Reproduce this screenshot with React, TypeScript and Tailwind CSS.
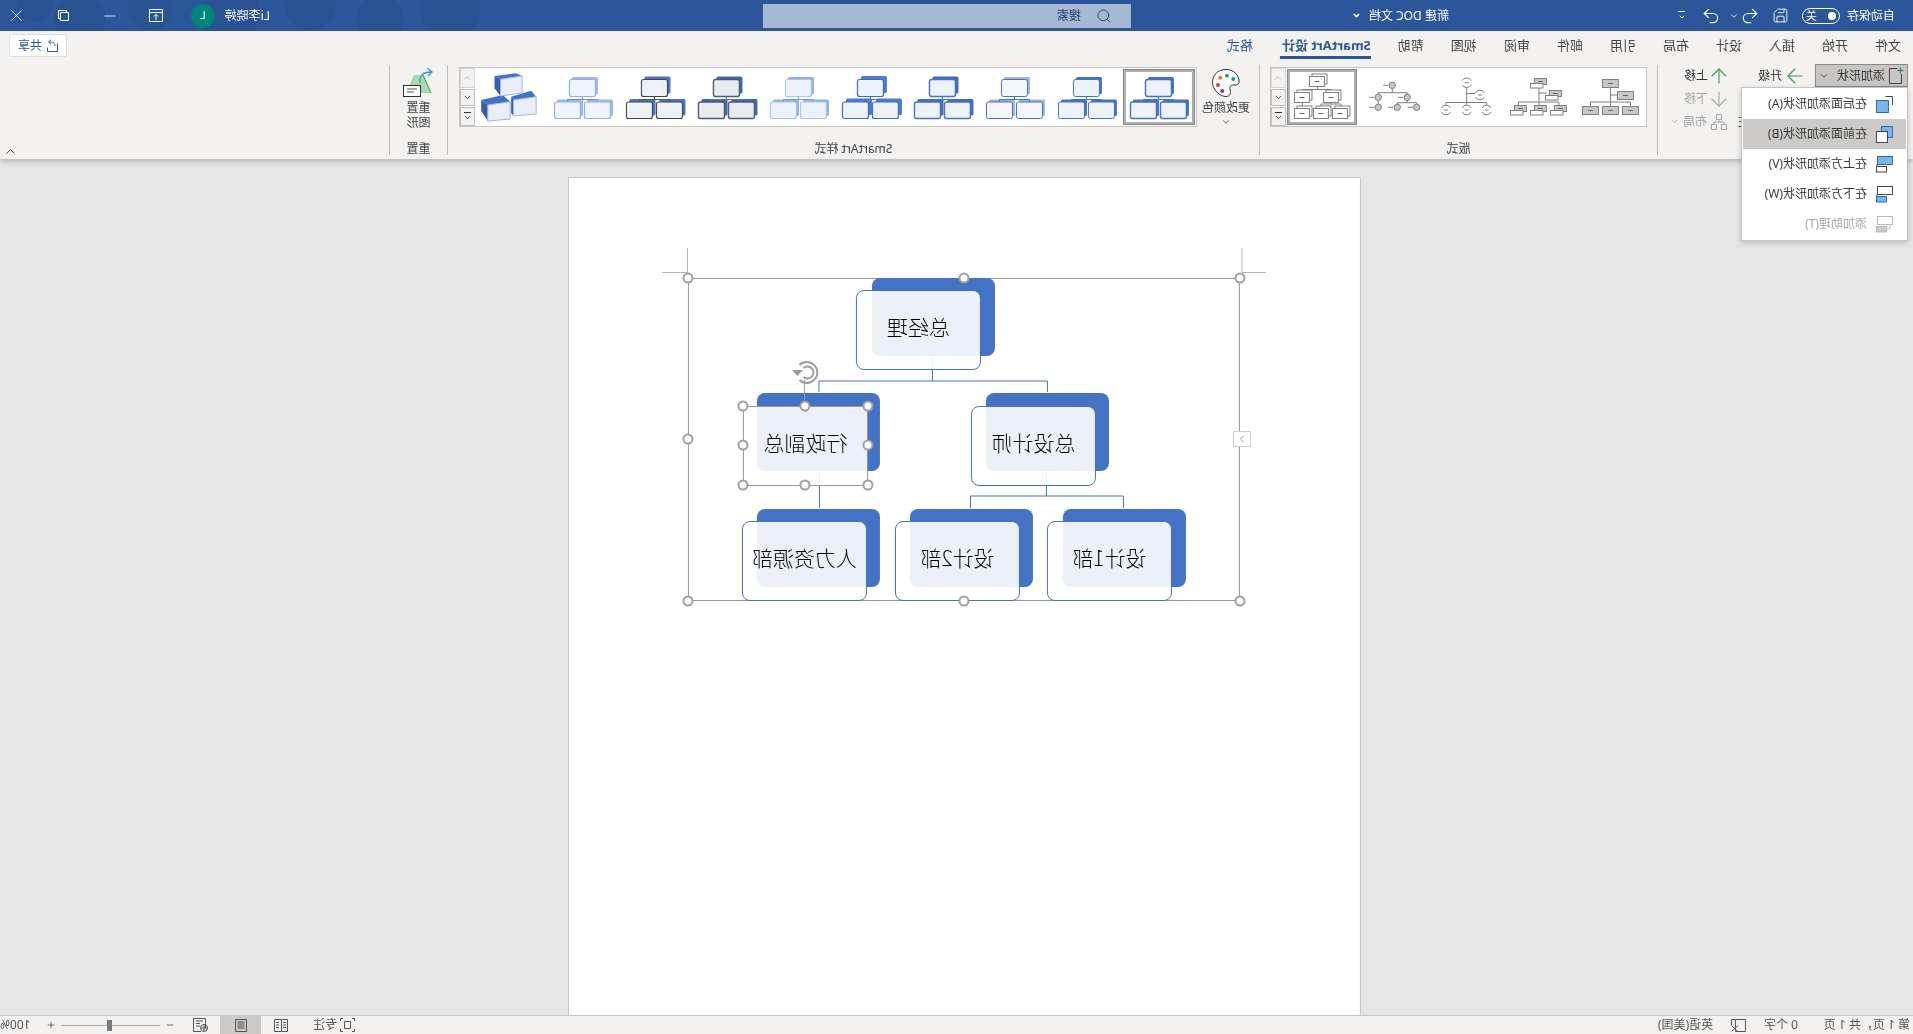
import {
  ArrowDown,
  ArrowRight,
  ArrowUp,
  ChevronDown,
  ChevronRight,
  ChevronUp,
  Minus,
  Plus,
  Redo2,
  Save,
  Search,
  Undo2,
  X,
} from "lucide-react";
import type { ReactNode } from "react";

const TABS = ["文件", "开始", "插入", "设计", "布局", "引用", "邮件", "审阅", "视图", "帮助"];

// the whole page is flipped at the root; thumbs use this svg class to draw in picture coordinates
const THUMB = "-scale-x-100 block h-[56px] w-[72px]";

function TitleBar() {
  return (
    <div className="relative flex h-[31px] shrink-0 items-center overflow-hidden bg-[#2b579a] text-[12px] text-white">
      <svg className="absolute right-0 top-0 h-[31px] w-[480px]" viewBox="0 0 480 31">
        <g fill="#285292">
          <circle cx="30" cy="8" r="30" />
          <circle cx="100" cy="20" r="24" />
          <circle cx="170" cy="4" r="26" />
          <circle cx="250" cy="14" r="30" />
          <circle cx="330" cy="8" r="22" />
          <circle cx="400" cy="20" r="26" />
          <circle cx="445" cy="4" r="18" />
        </g>
      </svg>
      <span className="ml-[18px]">自动保存</span>
      <div className="ml-[7px] flex h-[16px] w-[38px] items-center justify-between rounded-full border border-white px-[3px] text-[11px] leading-none">
        <span className="size-[8px] rounded-full bg-white" />
        <span>关</span>
      </div>
      <Save className="ml-[13px]" size={17} strokeWidth={1.3} />
      <Undo2 className="ml-[12px]" size={20} strokeWidth={1.4} />
      <ChevronDown className="ml-[1px]" size={10} />
      <Redo2 className="ml-[8px]" size={20} strokeWidth={1.4} />
      <div className="ml-[14px] flex w-[10px] flex-col items-center">
        <span className="mb-[1px] h-px w-[7px] bg-white" />
        <ChevronDown size={8} strokeWidth={3} />
      </div>
      <span className="ml-[228px] w-[84px]">新建 DOC 文档</span>
      <ChevronDown size={9} strokeWidth={4} className="ml-[4px]" />
      <div className="ml-[221px] flex h-[24px] w-[368px] items-center bg-[#a7b9d2] text-[#1c3a6e]">
        <Search className="ml-[19px] -scale-x-100" size={16} strokeWidth={1.4} />
        <span className="ml-[15px]">搜索</span>
      </div>
      <span className="relative ml-[493px] w-[45px] whitespace-nowrap">Li李晓婷</span>
      <div className="relative ml-[10px] flex size-[24px] items-center justify-center rounded-full bg-[#00847c] text-[11px]">
        L
      </div>
      <svg className="relative ml-[28px]" width="14" height="14" viewBox="0 0 14 14" fill="none" stroke="white">
        <path d="M.5 .5h13v12H.5zM.5 3.500h13M7 11V5.500M4.800 7.500 7 5.300l2.200 2.200" />
      </svg>
      <Minus className="relative ml-[30px]" size={18} strokeWidth={1.1} />
      <svg className="relative ml-[32px]" width="11" height="11" viewBox="0 0 11 11" fill="none" stroke="white">
        <path d="M.5 2.500h8v8h-8zM2.500 2.500v-2h8v8h-2" />
      </svg>
      <X className="relative ml-[32px]" size={19} strokeWidth={1.1} />
    </div>
  );
}

function TabRow() {
  return (
    <div className="flex h-[31px] items-start pl-[12px] text-[13px] text-[#444]">
      <div className="flex gap-[27px]">
        {TABS.map((tab) => (
          <span key={tab} className="pt-[5px] leading-[18px]">
            {tab}
          </span>
        ))}
        <span className="h-[28px] border-b-[3px] border-[#2b579a] pr-[2px] pt-[5px] font-bold leading-[18px] text-[#2b579a]">
          SmartArt 设计
        </span>
        <span className="pt-[5px] leading-[18px] text-[#2b579a]">格式</span>
      </div>
      <div className="ml-auto mr-[9px] mt-[3px] flex h-[23px] w-[58px] items-center justify-center gap-[4px] rounded-[2px] border border-[#e1dfdd] bg-white text-[12px] text-[#2b579a]">
        <svg width="12" height="13" viewBox="0 0 12 13" fill="none" stroke="#2b579a">
          <path d="M.5 4.500v8h10v-4M3 7c0-3 2-4 6-4M7 .8 9.500 3 7 5.200" />
        </svg>
        共享
      </div>
    </div>
  );
}

function RowItem({ icon, label, muted }: { icon: ReactNode; label: string; muted?: boolean }) {
  return (
    <div className={`flex h-[23px] items-center gap-[3px] text-[12px] ${muted ? "text-[#a6a6a6]" : "text-[#333]"}`}>
      {icon}
      <span className="whitespace-nowrap">{label}</span>
    </div>
  );
}

function MenuIcon({ kind }: { kind: "a" | "b" | "c" | "d" | "e" }) {
  const blue = "#7db5ea";
  const edge = "#1f6fb5";
  const dark = "#444";
  if (kind === "a") {
    return (
      <svg width="17" height="17" viewBox="0 0 17 17" fill="none">
        <path d="M.5 9V.5h7" stroke={dark} />
        <rect x="4.500" y="4.500" width="12" height="12" fill={blue} stroke={edge} />
      </svg>
    );
  }
  if (kind === "b") {
    return (
      <svg width="17" height="17" viewBox="0 0 17 17" fill="none">
        <rect x=".5" y=".5" width="11" height="11" fill={blue} stroke={edge} />
        <rect x="5.500" y="5.500" width="11" height="11" fill="#fff" stroke={dark} />
      </svg>
    );
  }
  if (kind === "c") {
    return (
      <svg width="17" height="17" viewBox="0 0 17 17" fill="none">
        <rect x=".5" y=".5" width="15" height="8" fill={blue} stroke={edge} />
        <rect x="6.500" y="10.500" width="10" height="5.500" fill="#fff" stroke={dark} />
        <path d="M16 8v2" stroke={dark} />
      </svg>
    );
  }
  if (kind === "d") {
    return (
      <svg width="17" height="17" viewBox="0 0 17 17" fill="none">
        <rect x=".5" y=".5" width="15" height="8" fill="#fff" stroke={dark} />
        <rect x="6.500" y="10.500" width="10" height="5.500" fill={blue} stroke={edge} />
        <path d="M16 8v2" stroke={edge} />
      </svg>
    );
  }
  return (
    <svg width="17" height="17" viewBox="0 0 17 17" fill="none">
      <rect x=".5" y=".5" width="15" height="8" fill="#fff" stroke="#bbb" />
      <rect x="6.500" y="10.500" width="10" height="5.500" fill="#ccc" stroke="#bbb" />
      <path d="M3 8.500v4.500h3.500" stroke="#bbb" />
    </svg>
  );
}

function AddShapeMenu() {
  const items = [
    { kind: "a" as const, label: "在后面添加形状(A)" },
    { kind: "b" as const, label: "在前面添加形状(B)", active: true },
    { kind: "c" as const, label: "在上方添加形状(V)" },
    { kind: "d" as const, label: "在下方添加形状(W)" },
    { kind: "e" as const, label: "添加助理(T)", muted: true },
  ];
  return (
    <div className="absolute left-[5px] top-[25px] z-20 w-[167px] border border-[#c8c6c4] bg-white p-px shadow-[0_2px_6px_rgba(0,0,0,0.2)]">
      {items.map((item) => (
        <div
          key={item.kind}
          className={`flex h-[30px] items-center whitespace-nowrap pl-[13px] text-[12px] ${
            item.active ? "bg-[#cdcbc9]" : ""
          } ${item.muted ? "text-[#a6a6a6]" : "text-[#333]"}`}
        >
          <MenuIcon kind={item.kind} />
          <span className="ml-[9px]">{item.label}</span>
        </div>
      ))}
    </div>
  );
}

function CreateGroup() {
  return (
    <div className="relative flex h-[97px] w-[255px] shrink-0 pl-[5px] pt-[2px]">
      <div className="flex h-[23px] w-[93px] items-center border border-[#8a8886] bg-[#c8c6c4] pl-[3px] text-[12px] text-[#333]">
        <svg width="16" height="17" viewBox="0 0 16 17" fill="none">
          <path d="M6.500 1.500h8v15h-12V7" stroke="#444" />
          <path d="M3.500 .5v6M.5 3.500h6" stroke="#2e9e4f" strokeWidth="1.300" />
        </svg>
        <span className="ml-[3px] whitespace-nowrap">添加形状</span>
        <ChevronDown className="ml-[8px]" size={10} strokeWidth={2} />
      </div>
      <AddShapeMenu />
      <div className="ml-[10px] flex w-[78px] flex-col">
        <RowItem icon={<ArrowRight className="-mx-[2px]" size={24} strokeWidth={1.1} color="#2e9e4f" />} label="升级" />
        <div className="h-[23px]" />
        <div className="flex h-[23px] items-center pl-[19px] text-[12px] text-[#333]">
          <span className="whitespace-nowrap">从右向左</span>
        </div>
      </div>
      <div className="flex flex-col">
        <RowItem icon={<ArrowUp className="-my-[4px] -mx-[4px]" size={24} strokeWidth={1.1} color="#2e9e4f" />} label="上移" />
        <RowItem
          icon={<ArrowDown className="-my-[4px] -mx-[4px]" size={24} strokeWidth={1.1} color="#a6a6a6" />}
          label="下移"
          muted
        />
        <div className="flex h-[23px] items-center gap-[4px] text-[12px] text-[#a6a6a6]">
          <svg width="16" height="16" viewBox="0 0 16 16" fill="none" stroke="#a6a6a6">
            <path d="M5.500 .5h5v5h-5zM.5 10.500h5v5h-5zM10.500 10.500h5v5h-5zM8 5.500V8M3 10.500V8h10v2.500" />
          </svg>
          布局
          <ChevronDown size={9} strokeWidth={2} />
        </div>
      </div>
    </div>
  );
}

function Scroller() {
  return (
    <div className="flex w-[15px] shrink-0 flex-col gap-px self-stretch">
      <div className="flex h-[20px] items-center justify-center border border-[#d8d6d4] bg-[#f3f2f1] text-[#bdbbb9]">
        <ChevronUp size={10} strokeWidth={2} />
      </div>
      <div className="flex h-[18px] items-center justify-center border border-[#c0bebc] bg-[#f3f2f1] text-[#333]">
        <ChevronDown size={9} strokeWidth={2.5} />
      </div>
      <div className="flex h-[19px] flex-col items-center justify-center border border-[#c0bebc] bg-[#f3f2f1] text-[#333]">
        <span className="h-px w-[7px] bg-[#333]" />
        <ChevronDown size={9} strokeWidth={2.5} />
      </div>
    </div>
  );
}

function Box({ x, y, w, h, gray }: { x: number; y: number; w: number; h: number; gray?: boolean }) {
  return (
    <>
      <rect x={x} y={y} width={w} height={h} fill={gray ? "#c8c8c8" : "#fff"} stroke="#7f7f7f" />
      <path d={`M${x + w / 2 - 2.5} ${y + h / 2}h5`} stroke="#666" />
    </>
  );
}

function LayoutThumb({ index }: { index: number }) {
  if (index === 0) {
    return (
      <svg className={THUMB} viewBox="0 0 72 56" fill="none">
        <path d="M37.500 18v15M17.500 37v-4h40v4M37.500 33v4M37.500 26H44" stroke="#7f7f7f" />
        <Box x={29.5} y={10.5} w={16} h={8} gray />
        <Box x={44.5} y={22.5} w={16} h={8} gray />
        <Box x={9.5} y={37.5} w={16} h={8} gray />
        <Box x={29.5} y={37.5} w={16} h={8} gray />
        <Box x={49.5} y={37.5} w={16} h={8} gray />
      </svg>
    );
  }
  if (index === 1) {
    const pairs = [
      [33.5, 9.5, 29.5, 14.5],
      [48.5, 21.5, 44.5, 26.5],
      [13.5, 36.5, 9.5, 41.5],
      [33.5, 36.5, 29.5, 41.5],
      [53.5, 36.5, 49.5, 41.5],
    ];
    return (
      <svg className={THUMB} viewBox="0 0 72 56" fill="none">
        <path d="M38 18v15M17.500 37v-4h40.500v4M38 33v4M38 24h8" stroke="#7f7f7f" />
        {pairs.map(([gx, gy, wx, wy]) => (
          <g key={`${gx}-${gy}`}>
            <Box x={gx} y={gy} w={12} h={6} gray />
            <rect x={wx} y={wy} width={12.5} height={4.5} fill="#fff" stroke="#7f7f7f" />
          </g>
        ))}
      </svg>
    );
  }
  if (index === 2) {
    const rings = [
      [37.7, 13.7],
      [51, 26],
      [17, 41],
      [37.7, 41],
      [57.7, 41],
    ];
    return (
      <svg className={THUMB} viewBox="0 0 72 56" fill="none" stroke="#7f7f7f">
        <path d="M37.700 18.500v15M17 36v-2.500h40.700V36M37.700 33.500V36M37.700 24.500H46" />
        {rings.map(([cx, cy]) => (
          <path
            key={`${cx}-${cy}`}
            d={`M${cx - 4.5} ${cy - 2}a5 5 0 0 1 9 0M${cx - 4.5} ${cy + 2}a5 5 0 0 0 9 0M${cx - 2} ${cy}h4`}
          />
        ))}
      </svg>
    );
  }
  if (index === 3) {
    const dots = [
      [35.3, 16.3],
      [21.3, 28.3],
      [21.3, 38.3],
      [50.3, 28.3],
      [40.3, 38.3],
      [59.7, 38.3],
    ];
    return (
      <svg className={THUMB} viewBox="0 0 72 56" fill="none" stroke="#7f7f7f">
        <path d="M35.300 19v4.700M21.300 28v-4.300h29V28M21.300 28v10M50.300 31v2.700M40.300 38v-4.300h19.400V38" />
        {dots.map(([cx, cy]) => (
          <g key={`${cx}-${cy}`}>
            <circle cx={cx} cy={cy} r="3.200" fill="#c8c8c8" />
            <path d={`M${cx - 9} ${cy}h5`} />
          </g>
        ))}
      </svg>
    );
  }
  const stacks = [
    [24.5, 7.5],
    [9.5, 23.5],
    [38.5, 23.5],
    [9.5, 39.5],
    [28.5, 39.5],
    [47.5, 39.5],
  ];
  return (
    <svg className={THUMB} viewBox="0 0 72 56" fill="none" stroke="#7f7f7f">
      <path d="M32.500 17.500v3M17.500 23v-2.500h29V23M17.500 33v4M46 33v2h-10v2M46 35h10v2" />
      {stacks.map(([x, y]) => (
        <g key={`${x}-${y}`}>
          <rect x={x + 2.5} y={y - 2.5} width="15" height="10" fill="#fff" />
          <Box x={x} y={y} w={15} h={10} />
        </g>
      ))}
    </svg>
  );
}

function LayoutGallery() {
  return (
    <div className="mt-[5px] flex h-[60px] w-[377px] items-center border border-[#c8c6c4] bg-white pl-px">
      {[0, 1, 2, 3].map((index) => (
        <div key={index} className="w-[72px] shrink-0">
          <LayoutThumb index={index} />
        </div>
      ))}
      <div className="h-[56px] w-[70px] shrink-0 border-[3px] border-[#b1afad] outline outline-1 -outline-offset-1 outline-[#8a8886]">
        <div className="-m-[3px]">
          <LayoutThumb index={4} />
        </div>
      </div>
      <div className="ml-auto flex h-full">
        <Scroller />
      </div>
    </div>
  );
}

type StyleVariant = {
  back: string;
  stroke: string;
  line: string;
  fill: string;
  off?: number;
  width?: number;
};

const STYLE_VARIANTS: StyleVariant[] = [
  { back: "#4472c4", stroke: "#4472c4", line: "#4472c4", fill: "#eef2fa", width: 1.4 },
  { back: "#4472c4", stroke: "#4472c4", line: "#4472c4", fill: "#eef2fa" },
  { back: "#a3b4d9", stroke: "#4472c4", line: "#4472c4", fill: "#f4f6fb" },
  { back: "#3f6cc0", stroke: "#4472c4", line: "#4472c4", fill: "#eef2fa", off: 3, width: 1.4 },
  { back: "#4f7cd0", stroke: "#3f6cc0", line: "#4472c4", fill: "#eef2fa", off: 3.5, width: 1.2 },
  { back: "#8fb0e8", stroke: "#a8c6f2", line: "#7f9bd0", fill: "#eef2fc", width: 1.2 },
  { back: "#4168ae", stroke: "#4b5a78", line: "#5c78a8", fill: "#e9ebef", off: 3, width: 1.4 },
  { back: "#4a74c4", stroke: "#444", line: "#555", fill: "#eef1f8", off: 3, width: 1.1 },
  { back: "#9ab8ee", stroke: "#8fb0ec", line: "#6e8dc8", fill: "#f0f4fc", width: 1.2 },
];

function StyleThumb({ variant }: { variant: StyleVariant }) {
  const off = variant.off ?? 2.5;
  const boxes = [
    [22.5, 10.5, 26, 17],
    [7.5, 33, 26, 16.5],
    [37.5, 33, 26, 16.5],
  ];
  return (
    <svg className={THUMB} viewBox="0 0 72 56" fill="none">
      {boxes.map(([x, y, w, h]) => (
        <rect key={`b${x}`} x={x + off} y={y - off} width={w} height={h} rx="1.500" fill={variant.back} />
      ))}
      <path d="M35.500 27v3.500M20.500 33v-2.500h30V33" stroke={variant.line} />
      {boxes.map(([x, y, w, h]) => (
        <rect
          key={`f${x}`}
          x={x}
          y={y}
          width={w}
          height={h}
          rx="2"
          fill={variant.fill}
          stroke={variant.stroke}
          strokeWidth={variant.width ?? 1}
        />
      ))}
    </svg>
  );
}

function CubesThumb() {
  return (
    <svg className={THUMB} viewBox="0 0 72 56">
      <g transform="translate(-1.500 0)">
        <polygon points="7.700,31 29.300,26 36.700,32.700 14.300,36" fill="#4472c4" />
        <polygon points="7.700,31 14.300,36 14.300,52 7.700,42" fill="#3560ae" />
        <polygon points="14.300,36 36.700,32.700 36.700,50 14.300,52" fill="#e9eef8" stroke="#9db8e8" />
        <polygon points="37.700,27.700 57.700,21.700 62.700,27.700 40,31" fill="#4472c4" />
        <polygon points="37.700,27.700 40,31 40,47 37.700,44" fill="#3560ae" />
        <polygon points="40,31 62.700,27.700 62.700,45 40,47" fill="#e9eef8" stroke="#9db8e8" />
        <polygon points="21,7 42.700,4.300 48.700,7 27,10.300" fill="#4472c4" />
        <polygon points="21,7 27,10.300 27,27 21,19.300" fill="#3560ae" />
        <polygon points="27,10.300 48.700,7 48.700,24 27,27" fill="#e9eef8" stroke="#9db8e8" />
      </g>
    </svg>
  );
}

function StyleGallery() {
  return (
    <div className="mt-[5px] flex h-[60px] w-[738px] items-center border border-[#c8c6c4] bg-white pl-px">
      {STYLE_VARIANTS.map((variant, index) =>
        index === 0 ? (
          <div
            key={index}
            className="h-[56px] w-[72px] shrink-0 border-[3px] border-[#b1afad] outline outline-1 -outline-offset-1 outline-[#8a8886]"
          >
            <div className="-m-[3px]">
              <StyleThumb variant={variant} />
            </div>
          </div>
        ) : (
          <div key={index} className="w-[72px] shrink-0">
            <StyleThumb variant={variant} />
          </div>
        ),
      )}
      <div className="w-[72px] shrink-0">
        <CubesThumb />
      </div>
      <div className="ml-auto flex h-full">
        <Scroller />
      </div>
    </div>
  );
}

function Palette() {
  return (
    <svg className="-scale-x-100" width="28" height="28" viewBox="0 0 28 28" fill="#fff" stroke="#333">
      <path d="M14 .5C6 .5.5 6 .5 13c0 8 7.500 14.500 13.500 14.500 5 0 5-4.500 4-7.500-1-3 2-4.500 5-4 3 .5 4.500-2 4-5C26 5 21 .5 14 .5Z" />
      <g stroke="none">
        <circle cx="8.300" cy="8.700" r="2" fill="#e8761e" />
        <circle cx="15" cy="6.700" r="2" fill="#2fa84f" />
        <circle cx="21.300" cy="10" r="2" fill="#1b8ad2" />
        <circle cx="6" cy="16" r="2" fill="#e03c4c" />
        <circle cx="10.300" cy="22" r="2" fill="#8a2ca0" />
      </g>
    </svg>
  );
}

function ResetIcon() {
  return (
    <svg className="-scale-x-100" width="30" height="30" viewBox="0 0 30 30" fill="none">
      <polygon points="11,8 20,8 28,26 3,26" fill="#a9d9ad" />
      <path d="M20 8l8 18" stroke="#31a24c" />
      <rect x=".5" y="18.500" width="17" height="11" fill="#fff" stroke="#333" />
      <path d="M4 22h10M4 25h7" stroke="#555" />
      <path d="M17 16C16 9 20 5 28 5M24.500 1 29 5l-4 4" stroke="#2b9ae0" strokeWidth="1.300" />
    </svg>
  );
}

function RotateHandle() {
  return (
    <svg
      className="absolute left-[421px] top-[81px] z-10 -scale-x-100"
      width="27"
      height="26"
      viewBox="0 0 27 26"
      fill="none"
      stroke="#999"
      strokeWidth="1.800"
    >
      <path d="M7.500 6a10.500 10.500 0 1 1 0 15" />
      <path d="M11.500 9a6 6 0 1 1 0 9" />
      <polygon points="0,11 11,11 5.500,17" fill="#999" stroke="none" />
    </svg>
  );
}

function Separator() {
  return <div className="mt-[3px] h-[90px] w-px shrink-0 bg-[#c0bebc]" />;
}

function GroupLabel({ children }: { children: ReactNode }) {
  return <div className="absolute bottom-[2px] left-0 right-0 text-center text-[12px] leading-[16px] text-[#444]">{children}</div>;
}

function Ribbon() {
  return (
    <div className="relative z-10 h-[128px] shrink-0 bg-[#f3f2f1] shadow-[0_3px_5px_rgba(0,0,0,0.18)]">
      <TabRow />
      <div className="flex h-[97px]">
        <CreateGroup />
        <Separator />
        <div className="relative h-full w-[397px] shrink-0 pl-[10px]">
          <LayoutGallery />
          <GroupLabel>版式</GroupLabel>
        </div>
        <Separator />
        <div className="relative flex h-full w-[811px] shrink-0">
          <div className="flex w-[62px] shrink-0 flex-col items-center pl-[4px] pt-[7px] text-[12px] text-[#444]">
            <Palette />
            <span className="mt-[3px] whitespace-nowrap leading-[16px]">更改颜色</span>
            <ChevronDown className="mt-[1px]" size={10} strokeWidth={2} />
          </div>
          <StyleGallery />
          <GroupLabel>SmartArt 样式</GroupLabel>
        </div>
        <Separator />
        <div className="relative flex h-full w-[57px] shrink-0 flex-col items-center pt-[5px] text-[12px] leading-[15px] text-[#444]">
          <ResetIcon />
          <span className="mt-[3px]">重置</span>
          <span>图形</span>
          <GroupLabel>重置</GroupLabel>
        </div>
        <Separator />
        <ChevronUp className="absolute bottom-[0px] right-[3px] text-[#444]" size={15} strokeWidth={1.6} />
      </div>
    </div>
  );
}

const NODES = [
  {
    label: "总经理",
    back: "left-[245px] top-0",
    front: "left-[259px] top-[12px] border-[#4472c4]",
  },
  {
    label: "总设计师",
    back: "left-[131px] top-[115px]",
    front: "left-[144px] top-[128px] border-[#4472c4]",
  },
  {
    label: "行政副总",
    back: "left-[360px] top-[115px]",
    front: "left-[372px] top-[128px] border-transparent",
  },
  {
    label: "设计1部",
    back: "left-[54px] top-[231px]",
    front: "left-[68px] top-[243px] border-[#4472c4]",
  },
  {
    label: "设计2部",
    back: "left-[207px] top-[231px]",
    front: "left-[220px] top-[243px] border-[#4472c4]",
  },
  {
    label: "人力资源部",
    back: "left-[360px] top-[231px]",
    front: "left-[373px] top-[243px] border-[#4472c4]",
  },
];

const FRAME_HANDLES = [
  "left-0 top-0",
  "left-[276px] top-0",
  "left-[552px] top-0",
  "left-[552px] top-[161px]",
  "left-0 top-[323px]",
  "left-[276px] top-[323px]",
  "left-[552px] top-[323px]",
];

const SHAPE_HANDLES = [
  "left-[372px] top-[128px]",
  "left-[435px] top-[128px]",
  "left-[497px] top-[128px]",
  "left-[372px] top-[167px]",
  "left-[497px] top-[167px]",
  "left-[372px] top-[207px]",
  "left-[435px] top-[207px]",
  "left-[497px] top-[207px]",
];

function Handle({ className }: { className: string }) {
  return (
    <span
      className={`absolute z-20 size-[11px] -translate-x-1/2 -translate-y-1/2 rounded-full border-2 border-[#a0a0a0] bg-white ${className}`}
    />
  );
}

function Diagram() {
  return (
    <div className="relative ml-[120px] mt-[99px] h-[323px] w-[552px] font-['Noto_Sans_CJK_SC',sans-serif]">
      {/* crop marks */}
      <svg className="absolute -left-[26px] -top-[30px] h-[30px] w-[604px]" viewBox="0 0 604 30" fill="none" stroke="#b5b5b5">
        <path d="M0 24.500h24M24 0v24M578.500 0v24M578 24.500h26" />
      </svg>
      <div className="absolute inset-0 border border-[#999]" />
      <svg className="absolute inset-0 h-[322px] w-[552px]" viewBox="0 0 552 322" fill="none" stroke="#4472c4">
        <path d="M307.500 79v24M192.500 114v-11H421v11M420.500 194v36M193.500 194v24M116.500 230v-12h153v12" />
      </svg>
      {NODES.map((node) => (
        <div key={node.label} className={`absolute h-[78px] w-[123px] rounded-[8px] bg-[#4472c4] ${node.back}`} />
      ))}
      {NODES.map((node) => (
        <div
          key={`${node.label}-front`}
          className={`absolute flex h-[80px] w-[125px] items-center justify-center rounded-[8px] border bg-white/90 pb-[7px] text-[21px] font-light text-black ${node.front}`}
        >
          {node.label}
        </div>
      ))}
      {/* selected shape */}
      <div className="absolute left-[372px] top-[128px] z-10 h-[80px] w-[125px] border border-[#999]" />
      <div className="absolute left-[435px] top-[102px] z-10 h-[26px] w-px bg-[#999]" />
      <RotateHandle />
      {SHAPE_HANDLES.map((pos) => (
        <Handle key={pos} className={pos} />
      ))}
      {FRAME_HANDLES.map((pos) => (
        <Handle key={pos} className={pos} />
      ))}
      <div className="absolute -left-[11px] top-[153px] z-20 flex h-[16px] w-[18px] items-center justify-center border border-[#d0d0d0] bg-white text-[#777]">
        <ChevronRight size={12} strokeWidth={1.5} />
      </div>
    </div>
  );
}

function Workspace() {
  return (
    <div className="min-h-0 flex-1 overflow-hidden bg-[#e6e6e6] pt-[18px]">
      <div className="ml-[552px] h-[900px] w-[793px] border border-[#c8c6c4] bg-white pt-px">
        <Diagram />
      </div>
    </div>
  );
}

function StatusBar() {
  return (
    <div className="flex h-[19px] shrink-0 items-center border-t border-[#c8c6c4] bg-[#f3f2f1] text-[12px] leading-none text-[#555]">
      <span className="ml-[3px] w-[112px] whitespace-nowrap">第 1 页，共 1 页</span>
      <span className="w-[52px] whitespace-nowrap">0 个字</span>
      <svg width="15" height="13" viewBox="0 0 15 13" fill="none" stroke="#555">
        <path d="M.5.5h10v12H.5zM8 6.500l6.500 6M14.500 6.500 8 12.500M10.500.5h4V6" />
      </svg>
      <span className="ml-[18px] w-[1359px] whitespace-nowrap">英语(美国)</span>
      <svg width="15" height="14" viewBox="0 0 15 14" fill="none" stroke="#555">
        <path d="M.5 3V.5H3M12 .5h2.500V3M14.500 11v2.500H12M3 13.500H.5V11M4.500 3.500h6v7h-6z" />
      </svg>
      <span className="ml-[3px] w-[49px] whitespace-nowrap">专注</span>
      <svg width="14" height="13" viewBox="0 0 14 13" fill="none" stroke="#555">
        <path d="M.5.5h6v12h-6zM7 .5h6.500v12H7M2 3.500h3M2 6h3M2 8.500h3M9 3.500h3M9 6h3M9 8.500h3" />
      </svg>
      <div className="ml-[13px] flex h-full w-[41px] items-center justify-center bg-[#cdcbc9]">
        <svg width="12" height="13" viewBox="0 0 12 13" fill="none" stroke="#555">
          <path d="M.5.5h11v12H.5zM2.500 3h7M2.500 5h7M2.500 7h7M2.500 9h7" />
        </svg>
      </div>
      <svg className="ml-[12px]" width="15" height="14" viewBox="0 0 15 14" fill="none" stroke="#555">
        <path d="M2.500 10V.5h12v13H7M5 3h7M8 5.500h4M8 8h4" />
        <circle cx="4" cy="10" r="3.500" />
        <path d="M.5 10h7M4 6.500v7" />
      </svg>
      <Minus className="ml-[18px] shrink-0" size={10} strokeWidth={2} />
      <div className="relative ml-[5px] h-px w-[100px] bg-[#a6a6a6]">
        <span className="absolute -top-[5px] left-[48px] h-[11px] w-[5px] bg-[#7a7a7a]" />
      </div>
      <Plus className="ml-[5px] shrink-0" size={10} strokeWidth={2} />
      <span className="ml-[15px]">100%</span>
    </div>
  );
}

export default function App() {
  return (
    <div className="flex h-[1034px] w-[1913px] -scale-x-100 flex-col overflow-hidden font-['Noto_Sans','Noto_Sans_CJK_SC',sans-serif]">
      <TitleBar />
      <Ribbon />
      <Workspace />
      <StatusBar />
    </div>
  );
}
